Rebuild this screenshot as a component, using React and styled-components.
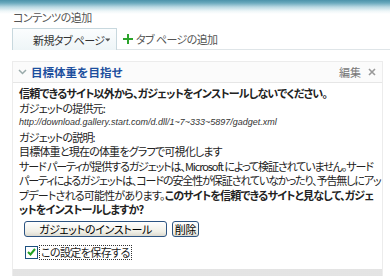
import styled, { createGlobalStyle } from "styled-components";

const GlobalStyle = createGlobalStyle`
    html, body {
        margin: 0;
        background: #fff;
    }
    body {
        font-family: "Noto Sans CJK JP", "Liberation Sans", sans-serif;
        font-size: 11px;
        color: #222;
    }
`;

const Page = styled.div`
    width: 390px;
    height: 276px;
    overflow: hidden;
    background: linear-gradient(180deg, #4b93aa 0px, #6aa9bd 3px, #b9d8e2 7px, #eef6f8 11px, #fff 14px);
`;

const Header = styled.header`
    padding: 10px 0 0 13px;
`;

const HeaderTitle = styled.div`
    font-size: 11px;
    line-height: 15px;
    color: #555;
    letter-spacing: -0.5px;
    font-feature-settings: "palt";
`;

const TabRow = styled.div`
    display: flex;
    align-items: stretch;
    margin-top: 3px;
    padding-left: 12px;
    height: 22px;
`;

const Tab = styled.div`
    width: 105px;
    display: flex;
    align-items: center;
    justify-content: space-between;
    padding: 0 6px 0 20px;
    box-sizing: border-box;
    border: 1px solid #c8d8de;
    border-bottom: none;
    background: linear-gradient(180deg, #fbfdfe, #eef5f7);
    color: #333;
    white-space: pre;
    letter-spacing: -0.6px;
    font-feature-settings: "palt";
`;

const TabRest = styled.div`
    flex: 1;
    display: flex;
    align-items: center;
    gap: 3px;
    padding-left: 6px;
    border-bottom: 1px solid #dfe5e8;
    color: #555;
    white-space: pre;
    letter-spacing: -0.6px;
    font-feature-settings: "palt";
`;

const Panel = styled.section`
    margin: 11px 7px 0 12px;
    border: 1px solid #ececec;
    border-bottom: none;
`;

const PanelHead = styled.div`
    height: 20px;
    display: flex;
    align-items: center;
    padding: 0 6px 0 5px;
    background: #fbfbfb;
    border-bottom: 1px solid #e6e6e6;
`;

const PanelTitle = styled.div`
    flex: 1;
    margin-left: 4px;
    color: #1d4f9e;
    font-weight: bold;
    font-size: 11.5px;
    letter-spacing: 0;
`;

const HeadLink = styled.span`
    color: #777;
    font-size: 11px;
    margin-right: 7px;
`;

const Body = styled.div`
    padding: 3px 0 0 6px;
    height: 183px;
    line-height: 14.5px;
    font-size: 11px;
    letter-spacing: -0.8px;
    font-feature-settings: "palt";
    color: #222;
    white-space: pre;
`;

const Line = styled.div`
    font-weight: ${p => (p.bold ? "bold" : "normal")};
    letter-spacing: ${p => (p.tight ? "-1.1px" : "inherit")};
`;

const Url = styled.div`
    font-style: italic;
    font-size: 9px;
    letter-spacing: 0;
    font-family: "Liberation Sans", sans-serif;
    color: #333;
`;

const Strong = styled.b`
    font-weight: bold;
`;

const ButtonRow = styled.div`
    display: flex;
    gap: 5px;
    margin: 4px 0 0 5px;
`;

const Button = styled.button`
    height: 16px;
    width: ${p => p.w}px;
    padding: 0;
    border: 1px solid #2d5482;
    border-radius: 3px;
    background: linear-gradient(180deg, #ffffff, #f0efe6 70%, #dcdad0);
    font-family: "Noto Sans CJK JP", sans-serif;
    font-size: 11px;
    line-height: 14px;
    letter-spacing: -0.3px;
    color: #000;
    font-feature-settings: "palt";
`;

const CheckRow = styled.label`
    display: flex;
    align-items: center;
    gap: 2px;
    margin: 9px 0 0 6px;
`;

const Box = styled.span`
    width: 11px;
    height: 11px;
    border: 1px solid #1c5180;
    background: #fff;
    display: flex;
    align-items: center;
    justify-content: center;
`;

const CheckLabel = styled.span`
    outline: 1px dotted #333;
    padding: 0 1px;
    line-height: 13px;
    letter-spacing: -0.6px;
    color: #222;
`;

const Dots = styled.div`
    height: 8px;
    background-image: radial-gradient(circle, #e2e2e2 0.7px, transparent 0.8px);
    background-size: 2px 2px;
`;

export default function App() {
    return (
        <Page>
            <GlobalStyle />
            <Header>
                <HeaderTitle>コンテンツの追加</HeaderTitle>
            </Header>
            <TabRow>
                <Tab>
                    <span>新規タブ ページ</span>
                    <svg width="7" height="4" viewBox="0 0 7 4"><path d="M0 0h7L3.5 4z" fill="#555" /></svg>
                </Tab>
                <TabRest>
                    <svg width="10" height="10" viewBox="0 0 10 10"><path d="M4 0h2v4h4v2H6v4H4V6H0V4h4z" fill="#2ba42b" /></svg>
                    <span>タブ ページの追加</span>
                </TabRest>
            </TabRow>
            <Panel>
                <PanelHead>
                    <svg width="9" height="6" viewBox="0 0 9 6"><path d="M1 1l3.5 3.5L8 1" stroke="#9aa" strokeWidth="1.5" fill="none" /></svg>
                    <PanelTitle>目標体重を目指せ</PanelTitle>
                    <HeadLink>編集</HeadLink>
                    <svg width="8" height="8" viewBox="0 0 8 8"><path d="M1 1l6 6M7 1L1 7" stroke="#999" strokeWidth="1.6" /></svg>
                </PanelHead>
                <Body>
                    <Line bold>信頼できるサイト以外から、ガジェットをインストールしないでください。</Line>
                    <Line>ガジェットの提供元:</Line>
                    <Url>http://download.gallery.start.com/d.dll/1~7~333~5897/gadget.xml</Url>
                    <Line>ガジェットの説明:</Line>
                    <Line>目標体重と現在の体重をグラフで可視化します</Line>
                    <Line tight>サード パーティが提供するガジェットは、Microsoft によって検証されていません。サード</Line>
                    <Line tight>パーティによるガジェットは、コードの安全性が保証されていなかったり、予告無しにアッ</Line>
                    <Line>プデートされる可能性があります。<Strong>このサイトを信頼できるサイトと見なして、ガジェ</Strong></Line>
                    <Line bold>ットをインストールしますか?</Line>
                    <ButtonRow>
                        <Button w={143}>ガジェットのインストール</Button>
                        <Button w={27}>削除</Button>
                    </ButtonRow>
                    <CheckRow>
                        <Box>
                            <svg width="9" height="8" viewBox="0 0 9 8"><path d="M1 4l2.5 2.5L8 1" stroke="#21a121" strokeWidth="2" fill="none" /></svg>
                        </Box>
                        <CheckLabel>この設定を保存する</CheckLabel>
                    </CheckRow>
                </Body>
                <Dots />
            </Panel>
        </Page>
    );
}
